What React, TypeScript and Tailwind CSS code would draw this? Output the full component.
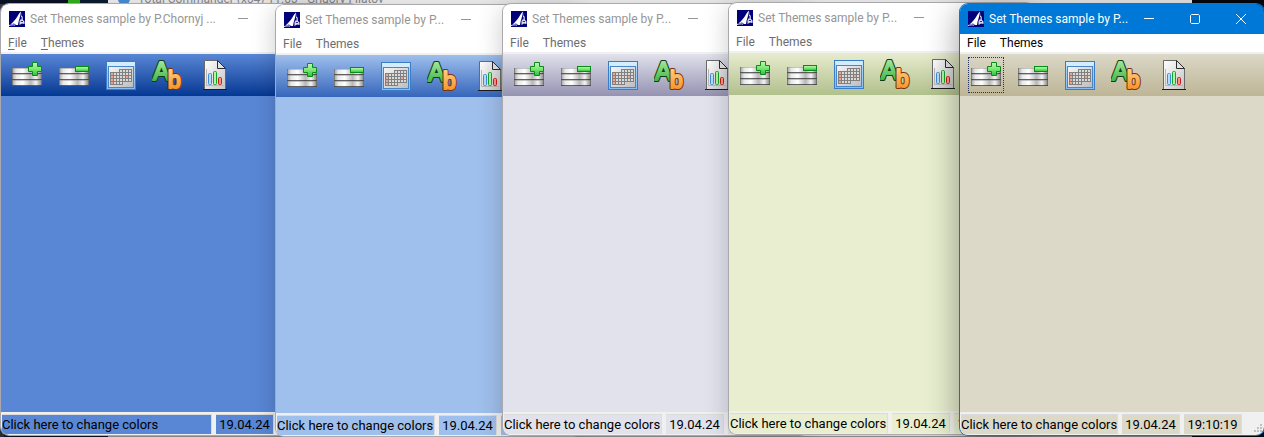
import clsx from "clsx"

type ThemeWindow = {
  id: string
  title: string
  place: string
  bar: string
  body: string
  active?: boolean
  showMnemonics?: boolean
}

const windows: ThemeWindow[] = [
  {
    id: "navy",
    title: "Set Themes sample by P.Chornyj ...",
    place: "left-px top-1 bottom-0.5 w-[357px]",
    bar: "bg-linear-to-b from-[#5987d6] to-[#033893]",
    body: "bg-[#5987d6]",
    showMnemonics: true,
  },
  {
    id: "blue",
    title: "Set Themes sample by P...",
    place: "left-[276px] top-[5px] bottom-px w-[305px]",
    bar: "bg-linear-to-b from-[#9fbfec] to-[#3666bb]",
    body: "bg-[#9fbfec]",
  },
  {
    id: "silver",
    title: "Set Themes sample by P...",
    place: "left-[503px] top-1 bottom-0.5 w-[305px]",
    bar: "bg-linear-to-b from-[#e1e2ec] to-[#9593b1]",
    body: "bg-[#e1e2ec]",
  },
  {
    id: "olive",
    title: "Set Themes sample by P...",
    place: "left-[729px] top-[3px] bottom-[3px] w-[305px]",
    bar: "bg-linear-to-b from-[#e8eccf] to-[#b1c08c]",
    body: "bg-[#e8eecf]",
  },
  {
    id: "sand",
    title: "Set Themes sample by P...",
    place: "left-[960px] right-0 top-1 bottom-0.5",
    bar: "bg-linear-to-b from-[#dcd8c8] to-[#bdb596]",
    body: "bg-[#dcd9c8]",
    active: true,
  },
]

const AppLogo = () => (
  <svg viewBox="0 0 16 16" className="size-4 shrink-0" aria-hidden="true">
    <rect width="16" height="16" fill="#00007b" />
    <path d="M12 0.5C9 3 8 8 1.5 13.5L5 12.5L7 14H9C9.5 9 11.5 6 12 0.5Z" fill="#fff" />
    <path d="M12.3 1V4.5L14 6V9L15.5 10.5V13L13 12.5L10.5 14V10L12 8V4" fill="#dcdcf0" />
    <path d="M12.8 6V8.5M11.8 10.5H14" stroke="#00007b" strokeWidth="0.8" />
    <path d="M0 14.5C2 14 4 13.5 6 14.2" stroke="#e8e8ff" strokeWidth="1" fill="none" />
  </svg>
)

const Stack = ({ id }: { id: string }) => (
  <>
    <defs>
      <linearGradient id={`${id}-metal`}>
        <stop offset="0" stopColor="#9c9c9c" />
        <stop offset="0.14" stopColor="#e8e8e8" />
        <stop offset="0.36" stopColor="#ffffff" />
        <stop offset="0.62" stopColor="#b8b8b8" />
        <stop offset="0.8" stopColor="#f4f4f4" />
        <stop offset="1" stopColor="#808080" />
      </linearGradient>
      <linearGradient id={`${id}-green`} x1="0" y1="0" x2="0" y2="1">
        <stop offset="0" stopColor="#c4f5b8" />
        <stop offset="0.5" stopColor="#7be872" />
        <stop offset="1" stopColor="#2cc03c" />
      </linearGradient>
    </defs>
    {[9, 15, 21].map((y) => (
      <g key={y}>
        <rect x="1" y={y} width="30" height="6" fill={`url(#${id}-metal)`} />
        <path d={`M1 ${y + 0.5}H31`} stroke="#909090" strokeOpacity="0.5" />
        <path d={`M1 ${y + 5.5}H31`} stroke="#303030" strokeOpacity="0.75" />
        <path d={`M1.5 ${y}V${y + 6}M30.5 ${y}V${y + 6}`} stroke="#555" strokeOpacity="0.5" />
      </g>
    ))}
  </>
)

const AddIcon = ({ id }: { id: string }) => (
  <svg viewBox="0 0 32 32" className="size-8" aria-hidden="true">
    <Stack id={id} />
    <path
      d="M21.5 3.5H26.5V7.5H30.5V12.5H26.5V16.5H21.5V12.5H17.5V7.5H21.5Z"
      fill={`url(#${id}-green)`}
      stroke="#0b8a1c"
    />
  </svg>
)

const RemoveIcon = ({ id }: { id: string }) => (
  <svg viewBox="0 0 32 32" className="size-8" aria-hidden="true">
    <Stack id={id} />
    <rect x="17.5" y="7.5" width="13" height="5" fill={`url(#${id}-green)`} stroke="#0b8a1c" />
  </svg>
)

const dates = [
  [3, 4, 5, 6],
  [0, 1, 2, 3, 4, 5, 6],
  [0, 1, 2, 3, 4, 5, 6],
  [0, 1, 2, 3, 4, 5, 6],
  [0, 1, 2, 3],
]

const CalendarIcon = ({ id }: { id: string }) => (
  <svg viewBox="0 0 32 32" className="size-8" aria-hidden="true">
    <defs>
      <linearGradient id={`${id}-frame`} x1="0" y1="0" x2="0" y2="1">
        <stop offset="0" stopColor="#d8f0ff" />
        <stop offset="0.3" stopColor="#a4d2f8" />
        <stop offset="1" stopColor="#86bcf2" />
      </linearGradient>
      <linearGradient id={`${id}-sheet`} x1="0" y1="0" x2="1" y2="1">
        <stop offset="0" stopColor="#f6f6f6" />
        <stop offset="1" stopColor="#bcbcbc" />
      </linearGradient>
    </defs>
    <rect x="1.5" y="2.5" width="29" height="28" fill={`url(#${id}-frame)`} stroke="#3a7cc8" />
    <path d="M3 4H29V7H3Z" fill="#d4ecff" />
    <rect x="3.5" y="7.5" width="25" height="21" fill={`url(#${id}-sheet)`} stroke="#4a86c4" />
    {dates.map((row, r) =>
      row.map((c) => (
        <rect
          key={`${r}-${c}`}
          x={5.5 + c * 3}
          y={10.5 + r * 3}
          width="3"
          height="3"
          fill={(c === 0 && r > 0) || (c === 5 && r === 2) ? "#f4a48c" : "#dadada"}
          stroke="#808080"
          strokeWidth="1"
        />
      )),
    )}
  </svg>
)

const FontIcon = ({ id }: { id: string }) => (
  <svg viewBox="0 0 32 32" className="size-8" aria-hidden="true">
    <defs>
      <linearGradient id={`${id}-a`} x1="0" y1="0" x2="0" y2="1">
        <stop offset="0" stopColor="#b6f0a8" />
        <stop offset="1" stopColor="#2fae3a" />
      </linearGradient>
      <linearGradient id={`${id}-b`} x1="0" y1="0" x2="0" y2="1">
        <stop offset="0" stopColor="#ffd48a" />
        <stop offset="1" stopColor="#f58a1c" />
      </linearGradient>
    </defs>
    <g fontFamily="'Liberation Sans', sans-serif" strokeLinejoin="round" fontSize="25">
      <text x="1" y="21" fill="#123d14" stroke="#123d14" strokeWidth="4">A</text>
      <text x="1" y="21" fill={`url(#${id}-a)`} stroke={`url(#${id}-a)`} strokeWidth="2">A</text>
      <text x="16" y="29" fontSize="23" fill="#7a3206" stroke="#7a3206" strokeWidth="4">b</text>
      <text x="16" y="29" fontSize="23" fill={`url(#${id}-b)`} stroke={`url(#${id}-b)`} strokeWidth="2">b</text>
    </g>
  </svg>
)

const ReportIcon = ({ id }: { id: string }) => (
  <svg viewBox="0 0 32 32" className="size-8" aria-hidden="true">
    <defs>
      <linearGradient id={`${id}-page`} x1="0" y1="0" x2="1" y2="1">
        <stop offset="0" stopColor="#ffffff" />
        <stop offset="1" stopColor="#c4c4c4" />
      </linearGradient>
    </defs>
    <path d="M5.5 1.5H18.5L26.5 9.5V30.5H5.5Z" fill={`url(#${id}-page)`} stroke="#6a6a6a" />
    <path d="M18.5 1.5V9.5H26.5Z" fill="#e2e2e2" stroke="#2c2c2c" />
    <path d="M4 30.5H28" stroke="#1c1c1c" />
    <path d="M7.5 10V26.5H25" stroke="#b8b8b8" fill="none" />
    <rect x="9.5" y="14.5" width="3" height="11" rx="1" fill="#b8dcfc" stroke="#3f8cd6" />
    <rect x="14.5" y="12.5" width="3" height="13" rx="1" fill="#b0f4a4" stroke="#14a12a" />
    <rect x="19.5" y="18.5" width="3" height="7" rx="1" fill="#fc9484" stroke="#c81c14" />
  </svg>
)

const tools = [
  { name: "Add", Icon: AddIcon },
  { name: "Remove", Icon: RemoveIcon },
  { name: "Calendar", Icon: CalendarIcon },
  { name: "Fonts", Icon: FontIcon },
  { name: "Report", Icon: ReportIcon },
]

const captions = [
  { name: "Minimize", d: "M0 4.5H10" },
  { name: "Maximize", d: "M1.5 0.5H8.5L9.5 1.5V8.5L8.5 9.5H1.5L0.5 8.5V1.5Z" },
  { name: "Close", d: "M0 0L10 10M10 0L0 10" },
]

const TitleBar = ({ win }: { win: ThemeWindow }) => (
  <header
    className={clsx(
      "flex h-[30px] shrink-0 items-center pl-2",
      win.active ? "bg-[#0078d7] text-white" : "bg-white text-[#969696]",
    )}
  >
    <AppLogo />
    <h2 className="min-w-0 flex-1 whitespace-nowrap pl-[5px]">{win.title}</h2>
    {captions.map((caption) => (
      <button key={caption.name} aria-label={caption.name} className="flex h-full w-[46px] shrink-0 items-center justify-center">
        <svg viewBox="0 0 10 10" className="size-2.5 overflow-visible" fill="none" stroke="currentColor">
          <path d={caption.d} />
        </svg>
      </button>
    ))}
  </header>
)

const MenuBar = ({ win }: { win: ThemeWindow }) => (
  <nav
    className={clsx(
      "flex h-5 shrink-0 items-center gap-[14px] border-b-2 border-[#f0f0f0] bg-white pl-[7px]",
      win.active ? "text-black" : "text-[#6d6d6d]",
    )}
  >
    {["File", "Themes"].map((item) => (
      <button key={item}>
        <span className={clsx(win.showMnemonics && "underline underline-offset-2")}>{item[0]}</span>
        {item.slice(1)}
      </button>
    ))}
  </nav>
)

const StatusBar = ({ win }: { win: ThemeWindow }) => {
  const panel = clsx("h-5 border-t border-r border-[#dcdcdc] leading-5 whitespace-nowrap", win.body)
  return (
    <footer className="relative flex h-[23px] shrink-0 items-center gap-1 bg-[#f0f0f0] pl-px pr-[22px] text-[13px] text-black">
      <button className={clsx(panel, "min-w-0 flex-1 text-left")}>Click here to change colors</button>
      <span className={clsx(panel, "w-[58px] text-center")}>19.04.24</span>
      <span className={clsx(panel, "w-[58px] text-center")}>19:10:19</span>
      <svg viewBox="0 0 9 9" className="absolute right-px bottom-0.5 size-[9px]" fill="#bfbfbf" aria-hidden="true">
        <path d="M6 0h2v2H6zM3 3h2v2H3zM6 3h2v2H6zM0 6h2v2H0zM3 6h2v2H3zM6 6h2v2H6z" />
      </svg>
    </footer>
  )
}

const SampleWindow = ({ win }: { win: ThemeWindow }) => (
  <section
    className={clsx(
      "absolute flex flex-col rounded-lg",
      win.place,
      win.active ? "shadow-[0_0_0_1px_#1272c4,0_6px_34px_rgba(0,0,0,0.4)]" : "shadow-[0_0_0_1px_#a9a9ad,0_4px_26px_rgba(0,0,0,0.22)]",
    )}
  >
    <div className="flex min-h-0 flex-1 flex-col overflow-hidden rounded-lg">
      <TitleBar win={win} />
      <MenuBar win={win} />
      <div role="toolbar" className={clsx("flex h-[42px] shrink-0 items-center gap-[11px] pl-2", win.bar)}>
        {tools.map(({ name, Icon }, i) => (
          <button
            key={name}
            aria-label={name}
            className={clsx(
              "flex size-9 shrink-0 items-center justify-center border border-dotted",
              win.active && i === 0 ? "border-[#26345c]" : "border-transparent",
            )}
          >
            <Icon id={`${win.id}-${i}`} />
          </button>
        ))}
      </div>
      <main className={clsx("flex-1", win.body)} />
      <StatusBar win={win} />
    </div>
  </section>
)

// the file manager that peeks out behind the sample windows
const Backdrop = () => (
  <div className="flex h-full">
    <div className="flex h-full w-[108px] shrink-0 flex-col justify-between bg-[#0b1224]">
      <div className="flex h-1 justify-end">
        <span className="w-3 bg-[#35b21c]" />
        <span className="w-7 bg-[#0a1c30]" />
      </div>
      <div className="flex w-1 flex-1 flex-col">
        <span className="h-16 bg-[#3a3c48]" />
        <span className="h-10 bg-[#b8483c]" />
        <span className="flex-1 bg-[#3c2c30]" />
        <span className="h-12 bg-[#8a6a3c]" />
        <span className="h-20 bg-[#28303c]" />
      </div>
    </div>
    <div className="flex-1 overflow-hidden border-b border-[#9a9a9a] bg-[#f0f0f0]">
      <div className="flex h-2.5 items-end gap-2 border-b border-[#c4c4c4] bg-[#f3f3f3] pl-2.5">
        <span className="mb-1 size-3 rounded-full bg-[#4a90d8]" />
        <p className="whitespace-nowrap pb-0.5 leading-4 text-[#8c8c8c]">Total Commander (x64) 11.03 - Grigory Filatov</p>
      </div>
    </div>
    <div className="w-[72px] shrink-0 bg-[#05070d]" />
  </div>
)

const App = () => {
  return (
    <div className="relative h-screen overflow-hidden bg-[#0b1224] font-['Roboto','Noto_Sans',sans-serif] text-[12px] leading-4">
      <Backdrop />
      {windows.map((win) => (
        <SampleWindow key={win.id} win={win} />
      ))}
    </div>
  )
}

export default App
